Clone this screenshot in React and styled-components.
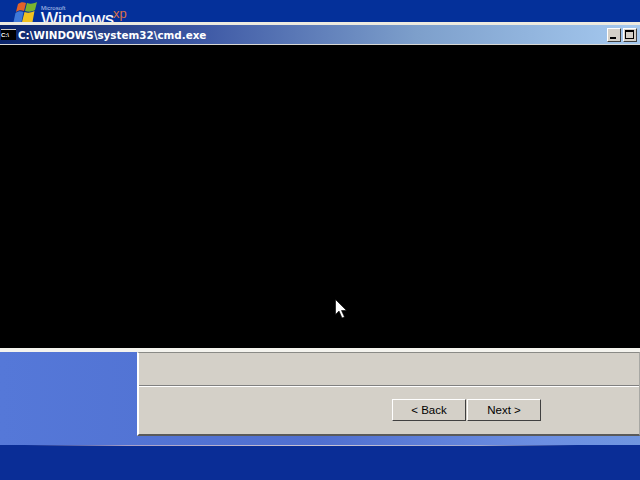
import styled, { createGlobalStyle } from "styled-components";

const Global = createGlobalStyle`
  html, body {
    margin: 0;
    padding: 0;
    background: #0a2d96;
  }
  * { box-sizing: border-box; }
`;

export default function App() {
  return (
    <Screen>
      <Global />
      <TopBar>
        <Logo>
          <svg width="36" height="22" viewBox="0 0 36 22">
            <path d="M16 4c3-2 5-2 8-1l-2 8c-3-1-5-1-8 1z" fill="#e2622a" />
            <path d="M25 3c3 1 6 1 10-1l-2 8c-3 2-7 2-10 1z" fill="#7ab32e" />
            <path d="M13.500 13c3-2 5-2 8-1l-2 10h-8z" fill="#3f78d8" />
            <path d="M22.500 12c3 1 6 1 10-1l-2 11H20z" fill="#f2c21f" />
          </svg>
          <Wordmark>
            <small>Microsoft</small>
            <b>Windows</b>
          </Wordmark>
          <Xp>xp</Xp>
        </Logo>
      </TopBar>

      <CmdWindow>
        <TitleBar>
          <ConsoleIcon>C:\</ConsoleIcon>
          <TitleText>C:\WINDOWS\system32\cmd.exe</TitleText>
          <WinControls>
            <WinButton aria-label="Minimize">
              <svg width="14" height="14" viewBox="0 0 14 14">
                <rect x="3" y="9" width="6" height="2" fill="#000" />
              </svg>
            </WinButton>
            <WinButton aria-label="Maximize">
              <svg width="14" height="14" viewBox="0 0 14 14">
                <path d="M2 2h9v9H2z M3 4v6h7V4z" fill="#000" fillRule="evenodd" />
              </svg>
            </WinButton>
          </WinControls>
        </TitleBar>
        <Console />
      </CmdWindow>

      <Wizard>
        <Dialog>
          <DialogTop />
          <DialogActions>
            <NavButton>&lt; Back</NavButton>
            <NavButton>Next &gt;</NavButton>
          </DialogActions>
        </Dialog>
      </Wizard>

      <BottomBar />

      <Cursor>
        <svg width="12" height="20" viewBox="0 0 12 20">
          <path d="M0.5 0.5v15l3.5-3.5 3 7 2.500-1-3-6.500h5z" fill="#fff" stroke="#000" strokeWidth="0.6" />
        </svg>
      </Cursor>
    </Screen>
  );
}

const Screen = styled.div`
  position: relative;
  width: 640px;
  height: 480px;
  overflow: hidden;
  display: flex;
  flex-direction: column;
  background: #0a2d96;
`;

const TopBar = styled.header`
  height: 22px;
  flex: none;
  background: #04309a;
  overflow: hidden;
`;

const Logo = styled.div`
  display: flex;
  align-items: flex-start;
  height: 22px;
  overflow: hidden;
  svg {
    display: block;
    flex: none;
    margin-left: 2px;
  }
`;

const Wordmark = styled.div`
  display: flex;
  flex-direction: column;
  margin-left: 3px;
  padding-top: 5px;
  font-family: "Liberation Sans", Arial, sans-serif;
  color: #fff;
  small {
    font-size: 6px;
    line-height: 6px;
    color: #b9c9ee;
  }
  b {
    font-size: 18px;
    line-height: 17px;
    font-weight: 400;
    -webkit-text-stroke: 0.2px #fff;
  }
`;

const Xp = styled.span`
  font-family: "Liberation Sans", Arial, sans-serif;
  font-size: 13px;
  line-height: 12px;
  color: #d8704a;
  padding-top: 8px;
  margin-left: -1px;
`;

const CmdWindow = styled.section`
  height: 326px;
  flex: none;
  display: flex;
  flex-direction: column;
  border-top: 3px solid #eceae0;
`;

const TitleBar = styled.div`
  height: 20px;
  flex: none;
  display: flex;
  align-items: center;
  background: linear-gradient(90deg, #0a246a 0%, #3f5aa6 32%, #7d9fcb 65%, #a6caf0 100%);
  border-bottom: 1px solid #d8d8d4;
`;

const ConsoleIcon = styled.span`
  width: 15px;
  height: 11px;
  margin-left: 1px;
  flex: none;
  background: #000;
  color: #fff;
  font: bold 6px/10px "Liberation Sans", Arial, sans-serif;
  border-top: 1px solid #d4d0c8;
`;

const TitleText = styled.span`
  margin-left: 2px;
  color: #fff;
  font: bold 10.35px "DejaVu Sans", Verdana, sans-serif;
  white-space: nowrap;
`;

const WinControls = styled.div`
  margin-left: auto;
  margin-right: 3px;
  display: flex;
  gap: 2px;
`;

const WinButton = styled.div`
  width: 14px;
  height: 14px;
  background: #d4d0c8;
  border: 1px solid;
  border-color: #fff #404040 #404040 #fff;
  display: flex;
  align-items: center;
  justify-content: center;
  svg { flex: none; }
`;

const Console = styled.div`
  flex: 1;
  background: #000;
`;

const Wizard = styled.section`
  height: 97px;
  flex: none;
  border-top: 4px solid #f4f3ee;
  background: linear-gradient(90deg, #5578d8 0%, #4f6fd0 50%, #6c8fe2 85%, #7096e0 100%);
  padding-left: 137px;
  padding-bottom: 9px;
  display: flex;
`;

const Dialog = styled.div`
  flex: 1;
  display: flex;
  flex-direction: column;
  background: #d4d0c8;
  border-top: 1px solid #8a8a86;
  border-left: 2px solid #fff;
  border-right: 1px solid #a8a8a4;
  border-bottom: 2px solid #5a5a5a;
`;

const DialogTop = styled.div`
  height: 33px;
  flex: none;
  border-bottom: 1px solid #808080;
  box-shadow: 0 1px 0 #fff;
`;

const DialogActions = styled.div`
  flex: 1;
  display: flex;
  padding: 13px 0 0 253px;
  gap: 1px;
`;

const NavButton = styled.button`
  width: 74px;
  height: 22px;
  padding: 0;
  background: #d4d0c8;
  border: 1px solid;
  border-color: #fff #404040 #404040 #fff;
  font: 11.5px "Liberation Sans", Arial, sans-serif;
  color: #000;
`;

const BottomBar = styled.footer`
  flex: 1;
  border-top: 1px solid;
  border-image: linear-gradient(90deg, #0a2d96 4%, #a8a0c8 20%, #c9c4d4 50%, #a0a8d0 75%, #0a2d96 90%) 1;
  background: #0a2d96;
`;

const Cursor = styled.div`
  position: absolute;
  left: 335px;
  top: 299px;
  line-height: 0;
`;
